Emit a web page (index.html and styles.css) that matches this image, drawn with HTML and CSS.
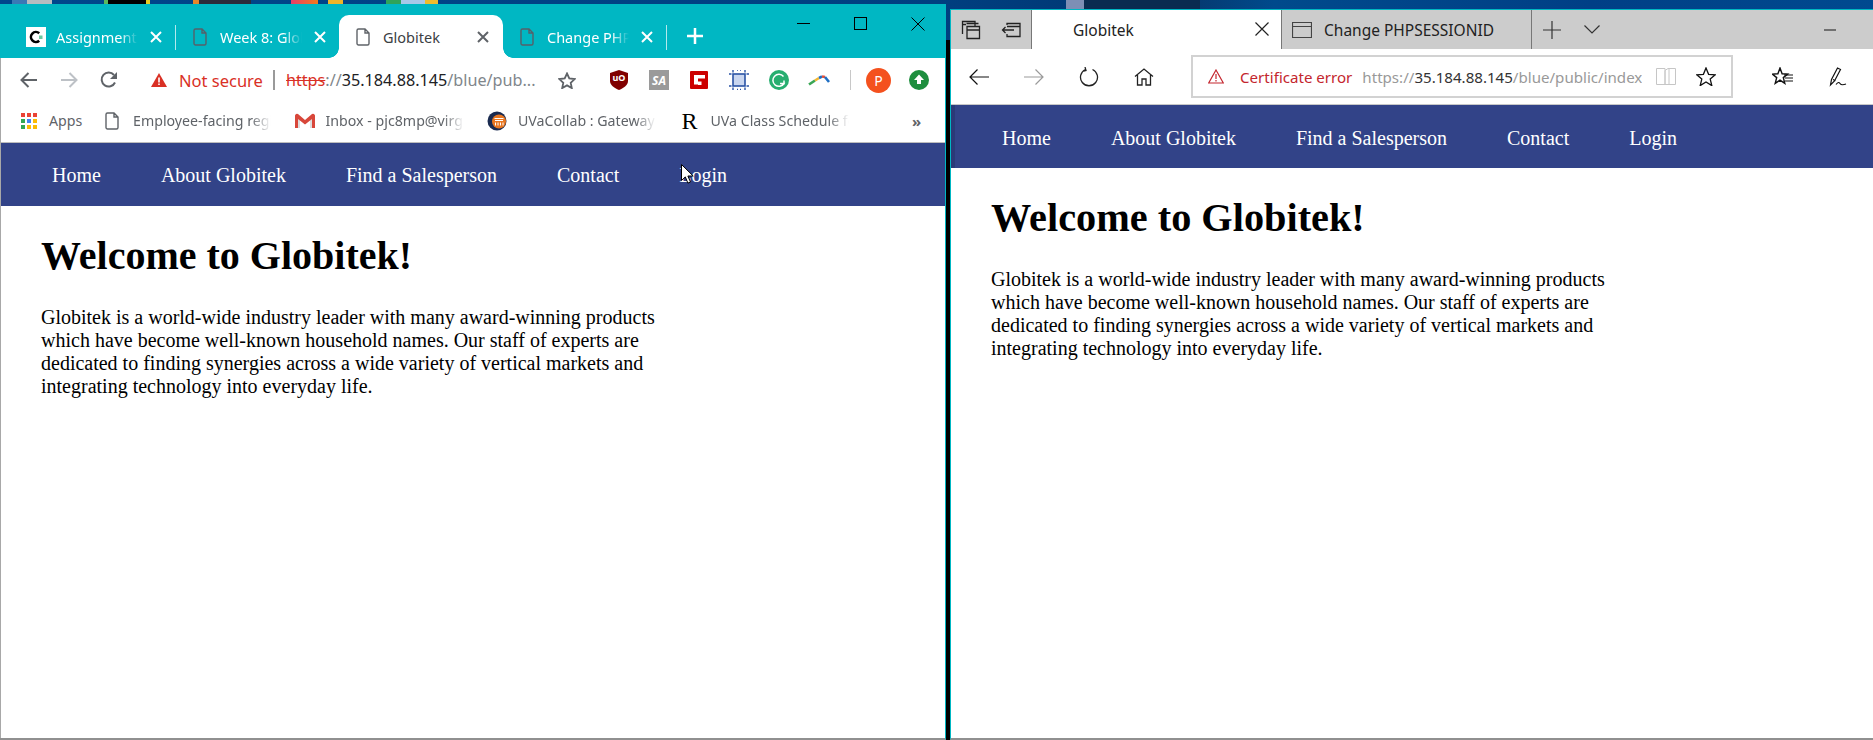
FILE: index.html
```html
<!DOCTYPE html>
<html lang="en">
<head>
<meta charset="utf-8">
<title>Globitek</title>
<link rel="stylesheet" href="styles.css">
</head>
<body>
<div class="desktop">
  <div class="desktop-strip">
    <span class="blot b1"></span><span class="blot b2"></span><span class="blot b3"></span><span class="blot b4"></span><span class="blot b5"></span><span class="blot b6"></span><span class="blot b7"></span><span class="blot b8"></span><span class="blot b9"></span><span class="blot b10"></span><span class="blot b11"></span><span class="blot b12"></span><span class="blot b13"></span><span class="blot b14"></span>
  </div>
  <div class="gap"></div>

  <section class="win chrome">
    <div class="c-tabs">
      <div class="c-tab sep">
        <span class="ico20"><svg width="20" height="20" viewBox="0 0 20 20"><rect width="20" height="20" fill="#fff"/><path d="M13.2 6.2A5 5 0 1 0 13.2 13.8" fill="none" stroke="#000" stroke-width="2.6"/><rect x="13" y="8.5" width="3.5" height="3.5" fill="#6cc8a0"/></svg></span>
        <span class="c-title">Assignment: Globitek</span>
        <svg class="c-x" width="12" height="12" viewBox="0 0 12 12"><path d="M1 1l10 10M11 1L1 11" stroke="#fff" stroke-width="2"/></svg>
      </div>
      <div class="c-tab">
        <span class="ico20"><svg width="14" height="18" viewBox="0 0 14 18"><path d="M1 2.5a1.5 1.5 0 0 1 1.5-1.5H9l4 4v10.500a1.500 1.500 0 0 1-1.500 1.500h-9A1.500 1.500 0 0 1 1 15.500zM9 1v4h4" fill="none" stroke="#55606a" stroke-width="1.400"/></svg></span>
        <span class="c-title">Week 8: Globitek</span>
        <svg class="c-x" width="12" height="12" viewBox="0 0 12 12"><path d="M1 1l10 10M11 1L1 11" stroke="#fff" stroke-width="2"/></svg>
      </div>
      <div class="c-tab active">
        <span class="ico20"><svg width="14" height="18" viewBox="0 0 14 18"><path d="M1 2.500a1.500 1.500 0 0 1 1.500-1.500H9l4 4v10.500a1.500 1.500 0 0 1-1.500 1.500h-9A1.500 1.500 0 0 1 1 15.500zM9 1v4h4" fill="none" stroke="#5f6368" stroke-width="1.400"/></svg></span>
        <span class="c-title">Globitek</span>
        <svg class="c-x" width="12" height="12" viewBox="0 0 12 12"><path d="M1 1l10 10M11 1L1 11" stroke="#5f6368" stroke-width="2"/></svg>
      </div>
      <div class="c-tab sep">
        <span class="ico20"><svg width="14" height="18" viewBox="0 0 14 18"><path d="M1 2.500a1.500 1.500 0 0 1 1.500-1.500H9l4 4v10.500a1.500 1.500 0 0 1-1.500 1.500h-9A1.500 1.500 0 0 1 1 15.500zM9 1v4h4" fill="none" stroke="#55606a" stroke-width="1.400"/></svg></span>
        <span class="c-title">Change PHPSESSIONID</span>
        <svg class="c-x" width="12" height="12" viewBox="0 0 12 12"><path d="M1 1l10 10M11 1L1 11" stroke="#fff" stroke-width="2"/></svg>
      </div>
      <svg class="c-plus" width="16" height="16" viewBox="0 0 16 16"><path d="M8 0v16M0 8h16" stroke="#fff" stroke-width="2.500"/></svg>
      <div class="c-ctrls">
        <svg width="20" height="14" viewBox="0 0 20 14"><path d="M3 6.500h13" stroke="#000" stroke-width="1"/></svg>
        <svg width="20" height="14" viewBox="0 0 14 14"><rect x="0.500" y="0.500" width="12" height="12" fill="none" stroke="#000" stroke-width="1"/></svg>
        <svg width="20" height="14" viewBox="0 0 14 14"><path d="M0.500 0.500l13 13M13.500 0.500l-13 13" stroke="#000" stroke-width="1"/></svg>
      </div>
    </div>

    <div class="c-body">
      <div class="c-toolbar">
        <span class="btn40"><svg width="18" height="16" viewBox="0 0 18 16"><path d="M17 8H2M8.500 1L1.500 8l7 7" fill="none" stroke="#5f6368" stroke-width="2"/></svg></span>
        <span class="btn40"><svg width="18" height="16" viewBox="0 0 18 16"><path d="M1 8h15M9.500 1l7 7-7 7" fill="none" stroke="#bdc1c6" stroke-width="2"/></svg></span>
        <span class="btn40"><svg width="18" height="18" viewBox="0 0 18 18"><path d="M15 11.500A7 7 0 1 1 14 4" fill="none" stroke="#5f6368" stroke-width="2"/><path d="M17 1v7h-7z" fill="#5f6368"/></svg></span>
        <div class="omnibox">
          <svg class="warn" width="16" height="14" viewBox="0 0 16 14"><path d="M8 0l8 14H0z" fill="#d93025"/><path d="M7.200 4.500h1.600v5H7.200zM7.200 10.500h1.600v1.600H7.200z" fill="#fff"/></svg>
          <span class="not-secure">Not secure</span>
          <span class="omni-sep"></span>
          <span class="url"><s class="https">https</s><span class="dim">://</span><span class="host">35.184.88.145</span><span class="dim">/blue/pub...</span></span>
          <svg class="omni-star" width="18" height="17" viewBox="0 0 18 17"><path d="M9 1.500l2.300 5 5.400.6-4 3.700 1.100 5.300L9 13.400l-4.800 2.700 1.100-5.300-4-3.700 5.400-.6z" fill="none" stroke="#5f6368" stroke-width="1.800"/></svg>
        </div>
        <span class="exts">
          <span class="btn40"><svg width="18" height="20" viewBox="0 0 18 20"><path d="M9 0l9 3v8c0 4-4 7-9 9-5-2-9-5-9-9V3z" fill="#800000"/><text x="9" y="11" text-anchor="middle" class="svg-ub">uO</text></svg></span>
          <span class="btn40"><span class="sa">SA</span></span>
          <span class="btn40"><svg width="18" height="18" viewBox="0 0 18 18"><rect width="18" height="18" rx="1" fill="#cc0000"/><path d="M4 4h11v3.500h-7v3H11.500V14H8v-.5H4z" fill="#fff"/></svg></span>
          <span class="btn40"><svg width="20" height="20" viewBox="0 0 20 20"><rect x="4" y="4" width="12" height="12" fill="#c9d6f0" stroke="#2a53a5" stroke-width="1.600"/><path d="M4 0v2.500M16 0v2.500M4 17.500V20M16 17.500V20M0 4h2.500M0 16h2.500M17.500 4H20M17.500 16H20M8 0h1M11 0h1M8 19.500h1M11 19.500h1" stroke="#2a53a5" stroke-width="1.400"/></svg></span>
          <span class="btn40"><svg width="20" height="20" viewBox="0 0 20 20"><circle cx="10" cy="10" r="10" fill="#27ae70"/><path d="M14.500 6.500A6 6 0 1 0 15 13.500h-4M15 10.500v4" fill="none" stroke="#fff" stroke-width="1.500"/></svg></span>
          <span class="btn40"><svg width="22" height="12" viewBox="0 0 22 12"><path d="M1 10.500L7 6.500" stroke="#3aa655" stroke-width="2.600"/><path d="M7 6.500L11 4" stroke="#f2b632" stroke-width="2.600"/><path d="M11 4L14 2.500" stroke="#1f6fc4" stroke-width="2.600"/><path d="M14 2.500L17 3" stroke="#e2503a" stroke-width="2.600"/><path d="M17 3l4 5" stroke="#1f6fc4" stroke-width="2.600"/></svg></span>
          <span class="ext-sep"></span>
          <span class="avatar">P</span>
          <span class="btn40"><svg width="20" height="20" viewBox="0 0 20 20"><circle cx="10" cy="10" r="10" fill="#1e8e3e"/><path d="M10 4.500l5 5.500h-3v4H8v-4H5z" fill="#fff"/></svg></span>
        </span>
      </div>

      <div class="c-bookmarks">
        <div class="bm-apps">
          <span class="ico20"><svg width="16" height="16" viewBox="0 0 16 16"><rect width="4" height="4" fill="#ea4335"/><rect x="6" width="4" height="4" fill="#ea4335"/><rect x="12" width="4" height="4" fill="#ea4335"/><rect y="6" width="4" height="4" fill="#34a853"/><rect x="6" y="6" width="4" height="4" fill="#4285f4"/><rect x="12" y="6" width="4" height="4" fill="#fbbc05"/><rect y="12" width="4" height="4" fill="#34a853"/><rect x="6" y="12" width="4" height="4" fill="#fbbc05"/><rect x="12" y="12" width="4" height="4" fill="#fbbc05"/></svg></span>
          <span class="bm-text">Apps</span>
        </div>
        <div class="bm">
          <span class="ico20"><svg width="14" height="18" viewBox="0 0 14 18"><path d="M1 2.500a1.500 1.500 0 0 1 1.500-1.500H9l4 4v10.500a1.500 1.500 0 0 1-1.500 1.500h-9A1.500 1.500 0 0 1 1 15.500zM9 1v4h4" fill="none" stroke="#5f6368" stroke-width="1.400"/></svg></span>
          <span class="bm-text fade">Employee-facing registration</span>
        </div>
        <div class="bm">
          <span class="ico20"><svg width="20" height="16" viewBox="0 0 20 16"><path d="M2 1l8 7 8-7v14h-3V7l-5 4-5-4v8H2z" fill="#ddd"/><path d="M0 2.500A2 2 0 0 1 3 1l7 6 7-6a2 2 0 0 1 3 1.500V15h-3V6l-7 5.500L3 6v9H0z" fill="#d8473a"/></svg></span>
          <span class="bm-text fade">Inbox - pjc8mp@virginia.edu</span>
        </div>
        <div class="bm">
          <span class="ico20"><svg width="20" height="20" viewBox="0 0 20 20"><circle cx="10" cy="10" r="9.500" fill="#1a2b50"/><circle cx="12" cy="10.500" r="7" fill="#e87722"/><path d="M7.500 7.500h9M8 9.500h8M8.500 11.500v3M11 11.500v3M13.500 11.500v3M16 11.500v3" stroke="#fff" stroke-width="1"/></svg></span>
          <span class="bm-text fade">UVaCollab : Gateway</span>
        </div>
        <div class="bm">
          <span class="ico20 r-fav">R</span>
          <span class="bm-text fade">UVa Class Schedule for</span>
        </div>
        <span class="bm-more">»</span>
      </div>

      <nav class="site-nav">
        <a class="site-link">Home</a><a class="site-link">About Globitek</a><a class="site-link">Find a Salesperson</a><a class="site-link">Contact</a><a class="site-link">Login</a>
      </nav>
      <main class="page">
        <h1 class="page-title">Welcome to Globitek!</h1>
        <p class="page-copy">Globitek is a world-wide industry leader with many award-winning products which have become well-known household names. Our staff of experts are dedicated to finding synergies across a wide variety of vertical markets and integrating technology into everyday life.</p>
      </main>
    </div>
  </section>

  <section class="win edge">
    <div class="e-tabs">
      <span class="e-btn"><svg width="20" height="20" viewBox="0 0 20 20"><path d="M1.500 14V1.500H14V6M5.500 3.500h12M6 6.500h12.500v12H6zM6 10h12.500M1.500 4.500H5" fill="none" stroke="#222" stroke-width="1.300"/></svg></span>
      <span class="e-btn"><svg width="20" height="16" viewBox="0 0 20 16"><path d="M6 3V1.500h13v13H6V12M6 4.500h13M13 8H1.500M4.500 5l-3 3 3 3" fill="none" stroke="#222" stroke-width="1.300"/></svg></span>
      <div class="e-tab active">
        <span class="e-title">Globitek</span>
        <svg class="e-x" width="14" height="14" viewBox="0 0 14 14"><path d="M.5.500l13 13M13.500.500l-13 13" stroke="#222" stroke-width="1.200"/></svg>
      </div>
      <div class="e-tab second">
        <svg class="e-page" width="20" height="16" viewBox="0 0 20 16"><path d="M.5.500h19v15H.500zM.5 4.500h19" fill="none" stroke="#444" stroke-width="1.200"/></svg>
        <span class="e-title">Change PHPSESSIONID</span>
      </div>
      <span class="e-btn"><svg width="18" height="18" viewBox="0 0 18 18"><path d="M9 0v18M0 9h18" stroke="#333" stroke-width="1.200"/></svg></span>
      <span class="e-btn"><svg width="16" height="9" viewBox="0 0 16 9"><path d="M.5.500L8 8l7.500-7.500" fill="none" stroke="#333" stroke-width="1.200"/></svg></span>
      <span class="e-min"><svg width="12" height="2" viewBox="0 0 12 2"><path d="M0 1h12" stroke="#333" stroke-width="1.200"/></svg></span>
    </div>

    <div class="e-toolbar">
      <span class="e-tool"><svg width="20" height="16" viewBox="0 0 20 16"><path d="M20 8H1M8.500.5L1 8l7.500 7.500" fill="none" stroke="#111" stroke-width="1.200"/></svg></span>
      <span class="e-tool"><svg width="20" height="16" viewBox="0 0 20 16"><path d="M0 8h19M11.500.5L19 8l-7.500 7.500" fill="none" stroke="#9a9a9a" stroke-width="1.200"/></svg></span>
      <span class="e-tool"><svg width="20" height="20" viewBox="0 0 20 20"><path d="M6.500 2.500a8.500 8.500 0 1 0 7 0M6 0l1 3.500-3.500 1" fill="none" stroke="#222" stroke-width="1.300"/></svg></span>
      <span class="e-tool"><svg width="20" height="18" viewBox="0 0 20 18"><path d="M1 8.500L10 1l9 7.500M3.500 7v10H8v-6h4v6h4.500V7" fill="none" stroke="#222" stroke-width="1.300"/></svg></span>
      <div class="e-address">
        <svg class="e-warn" width="16" height="15" viewBox="0 0 16 15"><path d="M8 1l7.300 13H.7z" fill="none" stroke="#c4262e" stroke-width="1.200"/><path d="M8 5v5M8 11v1.500" stroke="#c4262e" stroke-width="1.200"/></svg>
        <span class="cert">Certificate error</span>
        <span class="e-url"><span class="e-dim">https://</span><span class="e-host">35.184.88.145</span><span class="e-dim">/blue/public/index.php</span></span>
        <svg class="e-read" width="20" height="17" viewBox="0 0 20 17"><path d="M.5.500h8.500v16H.500zM9 2.500l3-2h7.500v16H9zM13 .5v16" fill="none" stroke="#c6c6c6" stroke-width="1"/></svg>
        <svg class="e-star" width="20" height="19" viewBox="0 0 20 19"><path d="M10 1l2.600 6.300 6.700.5-5.100 4.300 1.600 6.500L10 15l-5.800 3.600 1.600-6.500L.7 7.800l6.700-.5z" fill="none" stroke="#111" stroke-width="1.300"/></svg>
      </div>
      <span class="e-side"><svg width="21" height="20" viewBox="0 0 21 20"><path d="M8 1l2.100 5.800 5.600.3-4.400 3.500 1.500 5.700L8 13.100l-4.800 3.200 1.500-5.700L.3 7.100l5.600-.3z" fill="none" stroke="#111" stroke-width="1.400"/><path d="M12 8h9M13 11h8M13 14h8" fill="none" stroke="#111" stroke-width="1.200"/></svg></span>
      <span class="e-side"><svg width="18" height="20" viewBox="0 0 18 20"><path d="M1.500 18l1-5.500L8.500 1l3 1.500-6 11.500zM4 12.500l2.500 1.200M7 17.500c2-2.500 3-2.500 4-1s2 2 6 .5" fill="none" stroke="#111" stroke-width="1.200"/></svg></span>
    </div>

    <nav class="site-nav shaded">
      <a class="site-link">Home</a><a class="site-link">About Globitek</a><a class="site-link">Find a Salesperson</a><a class="site-link">Contact</a><a class="site-link">Login</a>
    </nav>
    <main class="page">
      <h1 class="page-title">Welcome to Globitek!</h1>
      <p class="page-copy">Globitek is a world-wide industry leader with many award-winning products which have become well-known household names. Our staff of experts are dedicated to finding synergies across a wide variety of vertical markets and integrating technology into everyday life.</p>
    </main>
  </section>

  <svg class="cursor" width="13" height="20" viewBox="0 0 13 20"><path d="M.5.500v16l3.800-3.600 2.600 6.200 2.600-1.100-2.600-6h5.300z" fill="#fff" stroke="#000" stroke-width="1"/></svg>
</div>
</body>
</html>
```

FILE: styles.css
```css
* { box-sizing: border-box; }
html, body { margin: 0; padding: 0; }
body { width: 1873px; height: 740px; overflow: hidden; font-family: "Noto Sans", sans-serif; }
svg { display: block; flex: none; }

.desktop { position: relative; width: 1873px; height: 740px; overflow: hidden; background: linear-gradient(90deg, #00468c 0%, #003f80 50%, #003a78 57%, #0a2c5a 60%, #004a8c 68%, #003f86 85%, #004a90 100%); }
.desktop-strip { position: absolute; left: 0; top: 0; width: 1873px; height: 10px; }
.blot { position: absolute; top: 0; height: 10px; }
.b1 { left: 12px; width: 15px; background: #3a78b5; }
.b2 { left: 27px; width: 25px; background: #b8bcc0; }
.b3 { left: 104px; width: 4px; background: #5cb85c; }
.b4 { left: 108px; width: 38px; background: #000; }
.b5 { left: 146px; width: 4px; background: #e8c820; }
.b6 { left: 193px; width: 6px; background: #e8862a; }
.b7 { left: 199px; width: 52px; background: #2b2b3a; }
.b8 { left: 291px; width: 27px; background: linear-gradient(90deg, #e83e6a, #f07a1c); }
.b9 { left: 328px; width: 15px; background: #f0b428; }
.b10 { left: 386px; width: 15px; background: #2fa35a; }
.b11 { left: 401px; width: 24px; background: #a8c8e8; }
.b12 { left: 425px; width: 13px; background: #eebc2c; }
.b13 { left: 1066px; width: 18px; background: #7d8fb5; }
.b14 { left: 1084px; width: 116px; background: #0a2c50; }
.gap { position: absolute; left: 945px; top: 40px; width: 6px; height: 700px; background: #000; }

.win { position: absolute; display: flex; flex-direction: column; background: #fff; border-bottom: 2px solid #909090; }
.chrome { left: 0; top: 4px; width: 946px; height: 736px; border-right: 1px solid #00b7c3; }
.edge { left: 950px; top: 9px; width: 923px; height: 731px; border-left: 1px solid #00b7c3; border-top: 1px solid #00b7c3; }

.ico20 { display: flex; align-items: center; justify-content: center; width: 20px; height: 20px; flex: none; }

/* Chrome tabs */
.c-tabs { display: flex; align-items: flex-end; height: 54px; padding-left: 12px; background: #00b7c3; flex: none; }
.c-tab { position: relative; display: flex; align-items: center; width: 164px; height: 43px; padding-left: 14px; color: #fff; }
.c-tab.sep::after { content: ""; position: absolute; right: 0; top: 10px; width: 1px; height: 25px; background: #b3e9ed; }
.c-tab.active { color: #3c4043; background: #fff; border-radius: 10px 10px 0 0; }
.c-tab.active::before, .c-tab.active::after { content: ""; position: absolute; bottom: 0; width: 10px; height: 10px; }
.c-tab.active::before { left: -10px; background: radial-gradient(circle at 0 0, transparent 9.500px, #fff 10px); }
.c-tab.active::after { right: -10px; background: radial-gradient(circle at 100% 0, transparent 9.500px, #fff 10px); }
.c-tab + .c-tab.active { margin-left: -1px; }
.c-title { width: 82px; margin-left: 10px; font-size: 14.500px; line-height: 20px; white-space: nowrap; overflow: hidden; -webkit-mask-image: linear-gradient(90deg, #000 78%, transparent); mask-image: linear-gradient(90deg, #000 78%, transparent); }
.c-tab.active .c-title { -webkit-mask-image: none; mask-image: none; }
.c-x { margin-left: 12px; }
.c-plus { margin: 0 0 14px 20px; }
.c-ctrls { display: flex; align-items: center; gap: 37px; margin: 0 0 27px 91px; }
.c-ctrls svg { width: 20px; }

/* Chrome toolbar */
.c-body { display: flex; flex-direction: column; flex: 1; min-height: 0; border-left: 1px solid #a8a8a8; }
.c-toolbar { display: flex; align-items: center; height: 42px; padding-left: 8px; padding-top: 2px; flex: none; }
.btn40 { display: flex; align-items: center; justify-content: center; width: 40px; height: 40px; flex: none; }
.omnibox { display: flex; align-items: center; width: 470px; height: 40px; padding-left: 22px; flex: none; }
.warn { margin-right: 12px; }
.not-secure { color: #d93025; font-size: 16.500px; white-space: nowrap; }
.omni-sep { width: 2px; height: 20px; margin: 0 11px 0 10px; background: #9a9a9a; flex: none; }
.url { width: 256px; font-size: 16.200px; white-space: nowrap; overflow: hidden; }
.https { color: #d93025; }
.dim { color: #80868b; }
.host { color: #202124; }
.omni-star { margin-left: 16px; }
.exts { display: flex; align-items: center; }
.svg-ub { fill: #fff; font: 700 9px "Noto Sans", sans-serif; }
.sa { display: flex; align-items: center; justify-content: center; width: 20px; height: 20px; background: #9a9a9a; color: #fff; font-size: 12px; font-weight: 700; font-style: italic; }
.ext-sep { width: 1px; height: 20px; margin: 0 7px 0 11px; background: #c8c8c8; }
.avatar { display: flex; align-items: center; justify-content: center; width: 25px; height: 25px; margin: 0 8px; border-radius: 50%; background: #f4511e; color: #fff; font-size: 14px; }

/* Chrome bookmarks */
.c-bookmarks { display: flex; align-items: center; height: 42px; padding-left: 18px; flex: none; box-shadow: 0 1px 0 #bdbdbd; position: relative; }
.bm-apps { display: flex; align-items: center; gap: 10px; width: 83px; flex: none; }
.bm { display: flex; align-items: center; gap: 11px; width: 192.500px; flex: none; }
.bm-text { font-size: 14.200px; line-height: 20px; color: #5f6368; white-space: nowrap; }
.bm-text.fade { width: 138px; overflow: hidden; -webkit-mask-image: linear-gradient(90deg, #000 85%, transparent); mask-image: linear-gradient(90deg, #000 85%, transparent); }
.r-fav { font: 400 24px/20px "Liberation Serif", serif; color: #000; }
.bm-more { margin-left: 40px; font-size: 15px; font-weight: 700; color: #5f6368; }

/* Site */
.site-nav { display: flex; gap: 60px; padding: 21px 0 19px 51px; margin-top: 1px; background: #324388; flex: none; }
.site-link { font: 400 20px/23px "Liberation Serif", serif; color: #fff; white-space: nowrap; }
.page { flex: 1; padding: 0 40px; background: #fff; font-family: "Liberation Serif", serif; color: #000; overflow: hidden; }
.page-title { margin: 27px 0; font-size: 40px; line-height: 46px; font-weight: 700; }
.page-copy { width: 640px; margin: 27px 0 0; font-size: 20px; line-height: 23px; }
.edge .page-title { font-size: 40.300px; }

/* Edge */
.e-tabs { display: flex; align-items: center; height: 39px; background: #cccccc; flex: none; }
.e-btn { display: flex; align-items: center; justify-content: center; width: 40px; height: 39px; flex: none; }
.e-tab { display: flex; align-items: center; width: 251px; height: 39px; flex: none; }
.e-tab.active { position: relative; padding-left: 41px; background: #fff; border-left: 1px solid #777; border-right: 1px solid #777; }
.e-tab.second { width: 250px; padding-left: 10px; border-right: 1px solid #777; }
.e-title { font-size: 15.500px; color: #222; white-space: nowrap; }
.e-x { position: absolute; right: 12px; top: 12px; }
.e-page { margin-right: 12px; }
.e-min { display: flex; justify-content: center; width: 46px; margin-left: 195px; flex: none; }
.e-toolbar { display: flex; align-items: center; height: 56px; background: #fff; border-bottom: 1px solid #c8c8c8; flex: none; }
.e-tool { display: flex; align-items: center; justify-content: center; width: 55px; height: 55px; flex: none; }
.e-address { display: flex; align-items: center; width: 542px; height: 43px; margin-left: 20px; padding-left: 15px; border: 2px solid #d2d2d2; flex: none; }
.e-warn { margin-right: 16px; }
.cert { color: #c4262e; font-size: 15.100px; white-space: nowrap; margin-right: 10px; }
.e-url { width: 280px; font-size: 15.100px; white-space: nowrap; overflow: hidden; }
.e-dim { color: #999; }
.e-host { color: #333; }
.e-read { margin-left: 14px; }
.e-star { margin-left: 20px; }
.e-side { display: flex; align-items: center; justify-content: center; width: 55px; height: 55px; flex: none; }
.e-address + .e-side { margin-left: 22px; }
.site-nav.shaded { margin-top: 0; padding-top: 22px; padding-bottom: 18px; box-shadow: inset 4px 0 0 rgba(0, 0, 0, .12); }

.cursor { position: absolute; left: 681px; top: 164px; }
```
